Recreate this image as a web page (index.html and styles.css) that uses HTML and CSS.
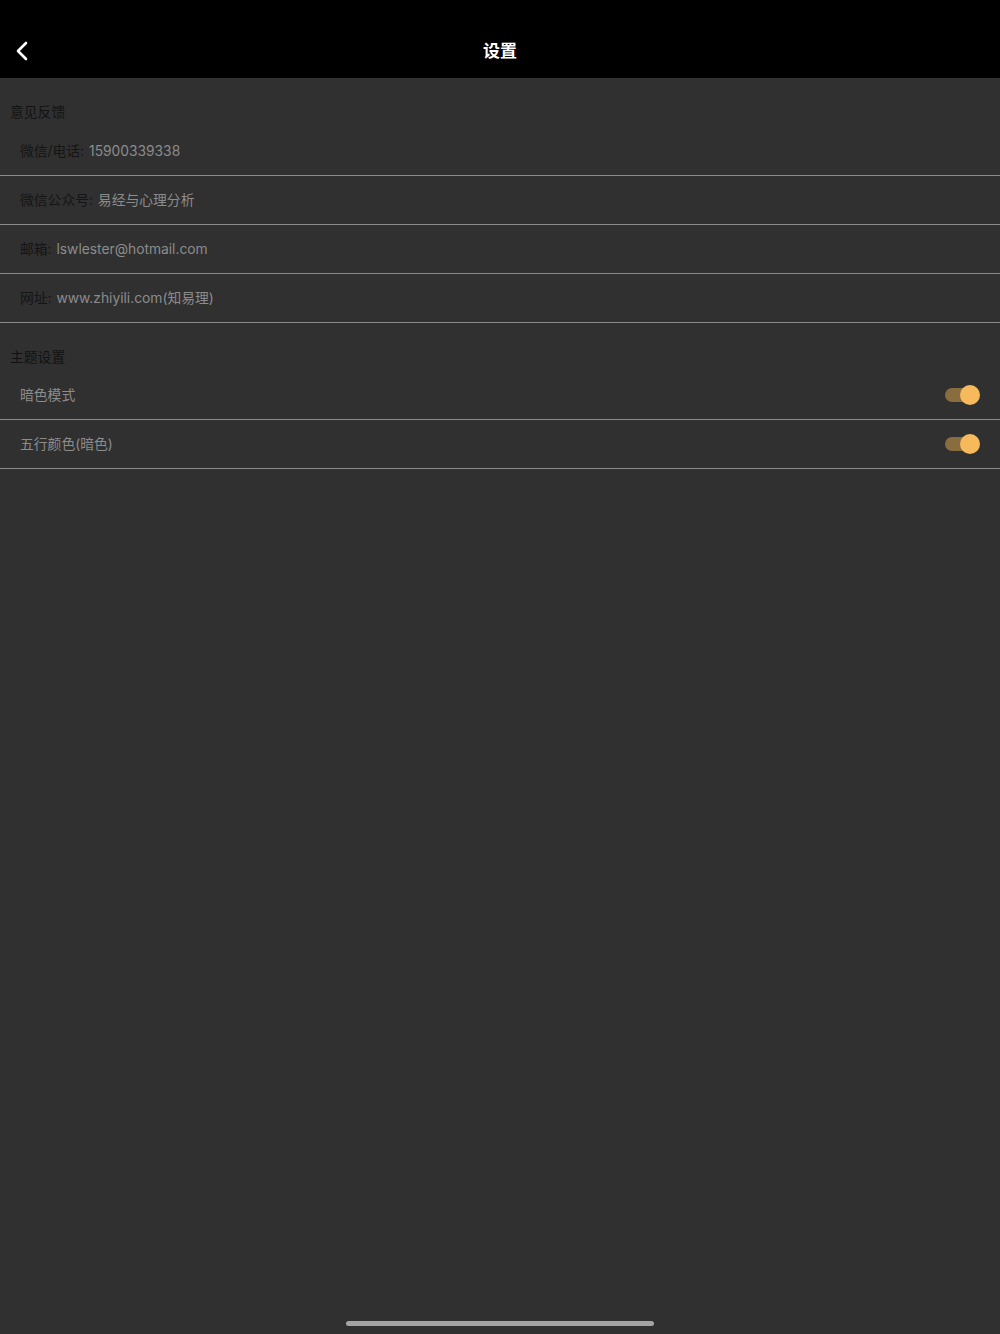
FILE: index.html
```html
<!DOCTYPE html>
<html lang="zh-CN">
<head>
<meta charset="utf-8">
<title>设置</title>
<link rel="stylesheet" href="styles.css">
</head>
<body>
<div class="screen">
  <header class="navbar">
    <button class="back" aria-label="返回">
      <svg width="14" height="20" viewBox="0 0 14 20"><path d="M11 2 L3 10 L11 18" fill="none" stroke="#fff" stroke-width="2.6" stroke-linecap="round" stroke-linejoin="round"/></svg>
    </button>
    <h1 class="title">设置</h1>
  </header>

  <section class="group">
    <div class="group-title first">意见反馈</div>
    <div class="row"><span class="label">微信/电话:</span>&nbsp;<span class="value">15900339338</span></div>
    <div class="row"><span class="label">微信公众号:</span>&nbsp;<span class="value">易经与心理分析</span></div>
    <div class="row"><span class="label">邮箱:</span>&nbsp;<span class="value">lswlester@hotmail.com</span></div>
    <div class="row"><span class="label">网址:</span>&nbsp;<span class="value">www.zhiyili.com(知易理)</span></div>
  </section>

  <section class="group">
    <div class="group-title">主题设置</div>
    <div class="row switch-row"><span class="value">暗色模式</span><span class="toggle"><span class="knob"></span></span></div>
    <div class="row switch-row"><span class="value">五行颜色(暗色)</span><span class="toggle"><span class="knob"></span></span></div>
  </section>

  <div class="home-indicator"></div>
</div>
</body>
</html>
```
FILE: styles.css
```css
* { box-sizing: border-box; }
html, body {
  margin: 0;
  padding: 0;
  background: #303030;
}
body {
  font-family: "Inter", "Noto Sans CJK SC", sans-serif;
  font-size: 13.8px;
}
.screen {
  position: relative;
  width: 1000px;
  height: 1334px;
  background: #303030;
  overflow: hidden;
}
.navbar {
  height: 78px;
  background: #000;
  display: flex;
  align-items: center;
  justify-content: center;
  position: relative;
  padding-top: 24px;
}
.back {
  position: absolute;
  left: 15px;
  top: 41px;
  background: none;
  border: 0;
  padding: 0;
  width: 14px;
  height: 20px;
  display: flex;
}
.title {
  margin: 0;
  color: #fff;
  font-size: 17px;
  font-weight: 700;
  line-height: 20px;
  margin-top: -1px;
}
.group-title {
  height: 48px;
  padding: 24px 10px 0;
  line-height: 20px;
  color: #121212;
  font-size: 13.8px;
}
.group-title.first {
  height: 49px;
  padding-top: 24px;
}
.row {
  height: 49px;
  border-bottom: 1px solid #8a8a8a;
  padding: 0 20px;
  display: flex;
  align-items: center;
  line-height: 20px;
}
.label {
  color: #151515;
  margin-right: 1px;
}
.value {
  color: #8c8c8c;
}
.switch-row {
  justify-content: space-between;
}
.toggle {
  position: relative;
  width: 35px;
  height: 14px;
  display: flex;
  align-items: center;
}
.toggle::before {
  content: "";
  width: 30px;
  height: 14px;
  border-radius: 7px;
  background: #8a6d3e;
}
.knob {
  position: absolute;
  right: 0;
  top: -3px;
  width: 20px;
  height: 20px;
  border-radius: 50%;
  background: #f6ba5c;
}
.home-indicator {
  position: absolute;
  left: 346px;
  bottom: 8px;
  width: 308px;
  height: 5px;
  border-radius: 3px;
  background: #a3a3a3;
}
```
